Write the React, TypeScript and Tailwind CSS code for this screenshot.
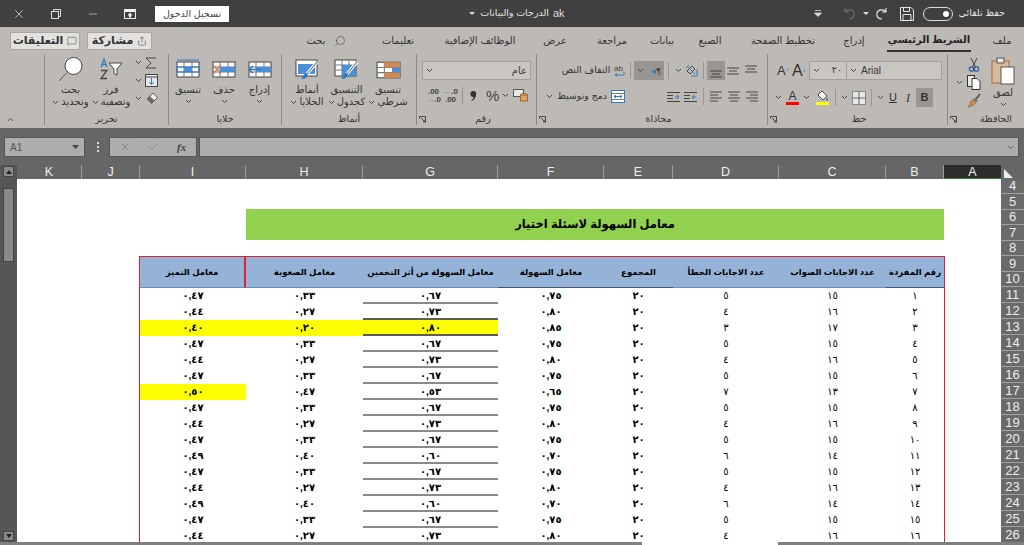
import type { ReactNode } from "react";
import { X, Minus, Search, MessageSquare, Share, ChevronUp, ChevronDown, Check } from "lucide-react";

const ar = "[font-family:'Liberation_Sans','DejaVu_Sans',sans-serif]";

// digits are spelled in Arabic-Indic, the sheet shows them that way
const rows = [
  ["١", "١٥", "٥", "٠,٧٥", "٠,٦٧", "٠,٣٣", "٠,٤٧"],
  ["٢", "١٦", "٤", "٠,٨٠", "٠,٧٣", "٠,٢٧", "٠,٤٤"],
  ["٣", "١٧", "٣", "٠,٨٥", "٠,٨٠", "٠,٢٠", "٠,٤٠"],
  ["٤", "١٥", "٥", "٠,٧٥", "٠,٦٧", "٠,٣٣", "٠,٤٧"],
  ["٥", "١٦", "٤", "٠,٨٠", "٠,٧٣", "٠,٢٧", "٠,٤٤"],
  ["٦", "١٥", "٥", "٠,٧٥", "٠,٦٧", "٠,٣٣", "٠,٤٧"],
  ["٧", "١٣", "٧", "٠,٦٥", "٠,٥٣", "٠,٤٧", "٠,٥٠"],
  ["٨", "١٥", "٥", "٠,٧٥", "٠,٦٧", "٠,٣٣", "٠,٤٧"],
  ["٩", "١٦", "٤", "٠,٨٠", "٠,٧٣", "٠,٢٧", "٠,٤٤"],
  ["١٠", "١٥", "٥", "٠,٧٥", "٠,٦٧", "٠,٣٣", "٠,٤٧"],
  ["١١", "١٤", "٦", "٠,٧٠", "٠,٦٠", "٠,٤٠", "٠,٤٩"],
  ["١٢", "١٥", "٥", "٠,٧٥", "٠,٦٧", "٠,٣٣", "٠,٤٧"],
  ["١٣", "١٦", "٤", "٠,٨٠", "٠,٧٣", "٠,٢٧", "٠,٤٤"],
  ["١٤", "١٤", "٦", "٠,٧٠", "٠,٦٠", "٠,٤٠", "٠,٤٩"],
  ["١٥", "١٥", "٥", "٠,٧٥", "٠,٦٧", "٠,٣٣", "٠,٤٧"],
  ["١٦", "١٦", "٤", "٠,٨٠", "٠,٧٣", "٠,٢٧", "٠,٤٤"],
];

const columns = [
  { name: "K", w: "w-[65px]" },
  { name: "J", w: "w-[58px]" },
  { name: "I", w: "w-[106px]" },
  { name: "H", w: "w-[117px]" },
  { name: "G", w: "w-[135px]" },
  { name: "F", w: "w-[106px]" },
  { name: "E", w: "w-[69px]" },
  { name: "D", w: "w-[106px]" },
  { name: "C", w: "w-[107px]" },
  { name: "B", w: "w-[58px]" },
];

const Caret = ({ className = "" }: { className?: string }) => (
  <svg width="7" height="5" viewBox="0 0 7 5" className={`shrink-0 ${className}`}>
    <path d="M1 1l2.500 2.500L6 1" fill="none" stroke="#444" strokeWidth="1" />
  </svg>
);

function Launcher() {
  return (
    <svg width="7" height="7" viewBox="0 0 7 7" className="ml-[2px] shrink-0">
      <path d="M.5 .5h6v6M.5 .5v2M2 2l4 4M4 6h2V4" fill="none" stroke="#444" strokeWidth="1" />
    </svg>
  );
}

// grid used by the big ribbon buttons
function Sheet({ children, w = 24, h = 20 }: { children?: ReactNode; w?: number; h?: number }) {
  return (
    <svg width={w} height={h} viewBox="0 0 24 20">
      <rect x="1" y="3" width="22" height="15" fill="#fff" stroke="#444" />
      <path d="M1 8h22M1 13h22M8 3v15M16 3v15" stroke="#777" strokeWidth="1" />
      {children}
    </svg>
  );
}

function BigButton({ icon, lines, caretBelow, w }: { icon: ReactNode; lines: string[]; caretBelow?: boolean; w: string }) {
  return (
    <div className={`${w} flex flex-col items-center`}>
      <div className="h-[30px] flex items-center justify-center">{icon}</div>
      {lines.map((line, i) => (
        <div key={line} className="h-[12px] flex items-center justify-center gap-[2px] text-[10px] leading-[12px] text-[#333] whitespace-nowrap">
          {!caretBelow && i === lines.length - 1 && <Caret />}
          <span>{line}</span>
        </div>
      ))}
      {caretBelow && <Caret className="mt-[3px]" />}
    </div>
  );
}

function Group({ w, label, launcher, labelPad = "", children }: { w: string; label: string; launcher?: boolean; labelPad?: string; children: ReactNode }) {
  return (
    <div className={`${w} h-[71px] flex flex-col border-l border-[#8c8985]`}>
      <div className="h-[59px] flex">{children}</div>
      <div className="h-[12px] flex items-center">
        {launcher && <div className="w-[13px] flex"><Launcher /></div>}
        <span className={`flex-1 text-center text-[9.5px] leading-[12px] text-[#333] ${labelPad}`}>{label}</span>
      </div>
    </div>
  );
}

const VLine = ({ className = "" }: { className?: string }) => <div className={`w-px h-[17px] bg-[#999591] ${className}`} />;

function AlignLines({ kind }: { kind: string }) {
  const paths: Record<string, string> = {
    top: "M1 2h12M3 5h8M1 8h12",
    mid: "M1 4h12M3 7h8M1 10h12",
    bot: "M1 7h12M3 10h8M1 13h12",
    left: "M1 2h12M1 5h8M1 8h12M1 11h8",
    center: "M1 2h12M3 5h8M1 8h12M3 11h8",
    right: "M1 2h12M5 5h8M1 8h12M5 11h8",
  };
  return (
    <svg width="14" height="14" viewBox="0 0 14 14">
      <path d={paths[kind]} stroke="#444" strokeWidth="1" fill="none" />
    </svg>
  );
}

function Indent({ flip }: { flip?: boolean }) {
  return (
    <svg width="13" height="12" viewBox="0 0 13 12">
      <path d="M0 1.500h13M0 10.500h13M0 4.500h6M0 7.500h6" stroke="#444" />
      <path d={flip ? "M12 6H8M10 4l2 2-2 2" : "M12 6H8M10 4L8 6l2 2"} stroke="#2f78c4" fill="none" />
    </svg>
  );
}

function TitleBar() {
  return (
    <div className="h-[27px] shrink-0 flex items-center bg-[#404040] text-[#e6e6e6] text-[9.5px]">
      <div className="w-[37px] flex justify-center"><X size={14} strokeWidth={1.2} /></div>
      <div className="w-[37px] flex justify-center">
        <svg width="10" height="10" viewBox="0 0 10 10" fill="none" stroke="#ddd"><rect x=".5" y="2.500" width="7" height="7" /><path d="M2.500 2.500v-2h7v7h-2" /></svg>
      </div>
      <div className="w-[37px] flex justify-center"><Minus size={12} strokeWidth={1.2} /></div>
      <div className="w-[37px] flex justify-center">
        <svg width="12" height="10" viewBox="0 0 12 10"><rect x=".5" y=".5" width="11" height="9" fill="none" stroke="#eee" /><path d="M1 1h10v2H1zM6 3.500l2.500 3h-1.500v2h-2v-2h-1.500z" fill="#eee" /></svg>
      </div>
      <button className="ml-[7px] w-[74px] h-[16px] bg-white text-[#444] text-[9.5px] leading-[16px] text-center">تسجيل الدخول</button>
      <svg width="6" height="4" viewBox="0 0 6 4" className="ml-[240px]"><path d="M0 0h6L3 3z" fill="#ddd" /></svg>
      <span className="ml-[5px] w-[69px] text-right whitespace-nowrap">الدرجات والبيانات</span>
      <span className="ml-[4px] text-[11px] text-[#ddd] [font-family:'Liberation_Sans',sans-serif]">ak</span>
      <div className="ml-auto flex items-center pr-[19px]">
        <svg width="8" height="7" viewBox="0 0 8 7"><path d="M1 .5h6M.5 3h7L4 6.500z" stroke="#ddd" fill="#ddd" strokeWidth=".8" /></svg>
        <svg width="14" height="13" viewBox="0 0 14 13" className="ml-[20px]" fill="none" stroke="#6f6f6f" strokeWidth="1.100"><path d="M3 1v4h4M3 5c2-3 8-3 9 1s-2 6-5 6" /></svg>
        <svg width="6" height="4" viewBox="0 0 6 4" className="ml-[7px]"><path d="M0 0h6L3 3z" fill="#ddd" /></svg>
        <svg width="14" height="13" viewBox="0 0 14 13" className="ml-[6px]" fill="none" stroke="#e6e6e6" strokeWidth="1.100"><path d="M11 1v4H7M11 5C9 2 3 2 2 6s2 6 5 6" /></svg>
        <svg width="14" height="14" viewBox="0 0 14 14" className="ml-[11px]" fill="none" stroke="#e6e6e6"><path d="M.5 .5h10.500l2.500 2.500v10.500H.5zM3.500 .5v4h6v-4M3 13.500v-6h8v6" /></svg>
        <div className="ml-[9px] w-[30px] h-[14px] rounded-full border border-[#ddd] flex items-center justify-end pr-[3px]">
          <span className="w-[6px] h-[6px] rounded-full bg-white" />
        </div>
        <span className="ml-[5px] w-[47px] text-right whitespace-nowrap">حفظ تلقائي</span>
      </div>
    </div>
  );
}

function TabRow() {
  const tabs = [
    { t: "تعليمات", w: "w-[94px]" },
    { t: "الوظائف الإضافية", w: "w-[70px]" },
    { t: "عرض", w: "w-[80px]" },
    { t: "مراجعة", w: "w-[34px]" },
    { t: "بيانات", w: "w-[66px]" },
    { t: "الصيغ", w: "w-[30px]" },
    { t: "تخطيط الصفحة", w: "w-[116px]" },
    { t: "إدراج", w: "w-[26px]" },
  ];
  return (
    <div className="h-[27px] shrink-0 flex items-center bg-[#bdbab6] text-[10px] text-[#333]">
      <div className="ml-[10px] w-[70px] h-[18px] flex items-center justify-center gap-[4px] bg-[#e3e1de] border border-[#a9a6a2] rounded-[2px] text-[11px] font-bold">
        <span>التعليقات</span>
        <MessageSquare size={10} strokeWidth={1.2} />
      </div>
      <div className="ml-[7px] w-[65px] h-[18px] flex items-center justify-center gap-[4px] bg-[#e3e1de] border border-[#a9a6a2] rounded-[2px] text-[11px] font-bold">
        <span>مشاركة</span>
        <Share size={10} strokeWidth={1.2} />
      </div>
      <span className="ml-[151px] w-[26px] text-center">بحث</span>
      <div className="w-[22px] flex justify-center"><Search size={12} strokeWidth={1} className="-scale-x-100" /></div>
      {tabs.map((tab) => (
        <div key={tab.t} className={`${tab.w} flex justify-center whitespace-nowrap`}>{tab.t}</div>
      ))}
      <div className="w-[124px] h-full flex justify-center">
        <span className="h-[23px] mt-[2px] pt-[3px] px-px font-bold text-[#222] border-b-2 border-[#333] whitespace-nowrap">الشريط الرئيسي</span>
      </div>
      <div className="w-[22px] flex justify-center whitespace-nowrap">ملف</div>
    </div>
  );
}

function Ribbon() {
  return (
    <div className="h-[74px] shrink-0 flex items-start bg-[#bdbab6]">
      {/* collapse */}
      <div className="w-[44px] h-[71px] flex items-end pl-[6px] pb-[1px]"><ChevronUp size={9} className="text-[#333]" /></div>

      <Group w="w-[124px]" label="تحرير">
        <div className="flex pl-[5px]">
          <BigButton w="w-[41px]" lines={["بحث", "وتحديد"]} icon={
            <svg width="26" height="26" viewBox="0 0 26 26"><circle cx="15.500" cy="10" r="8.500" fill="#fff" stroke="#444" /><path d="M9 16.500L1 25" stroke="#555" /></svg>
          } />
          <BigButton w="w-[40px]" lines={["فرز", "وتصفية"]} icon={
            <svg width="24" height="24" viewBox="0 0 24 24"><path d="M2 10l3-8 3 8M3 7.500h4" stroke="#2f78c4" fill="none" strokeWidth="1.300" /><path d="M2 13.500h6l-6 8h6" stroke="#444" fill="none" strokeWidth="1.300" /><path d="M10 6h13l-5 6v6l-3-1.500V12z" fill="#fff" stroke="#444" /></svg>
          } />
        </div>
        <div className="ml-[4px] pt-[1px] flex flex-col gap-[3px]">
          {[
            <svg key="s" width="12" height="12" viewBox="0 0 12 12"><path d="M11 1H1l5 5-5 5h10" fill="none" stroke="#444" /></svg>,
            <svg key="f" width="13" height="13" viewBox="0 0 13 13"><rect x=".5" y=".5" width="12" height="12" fill="#e8e8e8" stroke="#444" /><path d="M.5 3h12" stroke="#444" /><path d="M6.500 4v6M4 8l2.500 2.500L9 8" fill="none" stroke="#2f78c4" /></svg>,
            <svg key="e" width="13" height="13" viewBox="0 0 13 13"><path d="M8 1l4.500 4.500-6 6L2 7z" fill="#f2f2f2" stroke="#555" /><path d="M5 4l4.500 4.500L6.500 11.500 2 7z" fill="#6d6d6d" /></svg>,
          ].map((icon, i) => (
            <div key={i} className="h-[15px] flex items-center gap-[3px]"><Caret />{icon}</div>
          ))}
        </div>
      </Group>

      <Group w="w-[113px]" label="خلايا">
        <div className="flex pl-[2px]">
          <BigButton w="w-[34px]" caretBelow lines={["تنسيق"]} icon={
            <Sheet><path d="M1 1h22" stroke="#2f78c4" /><rect x="8" y="8" width="8" height="5" fill="#4a90d9" /><rect x="1" y="8" width="22" height="5" fill="none" stroke="#2f78c4" /></Sheet>
          } />
          <BigButton w="w-[38px]" caretBelow lines={["حذف"]} icon={
            <Sheet><rect x="8" y="8" width="15" height="5" fill="#4a90d9" /><path d="M1 6l8 9M9 6l-8 9" stroke="#c9824f" strokeWidth="1.300" /></Sheet>
          } />
          <BigButton w="w-[33px]" caretBelow lines={["إدراج"]} icon={
            <Sheet><rect x="8" y="8" width="15" height="5" fill="#4a90d9" /><path d="M1 10.500h12M5 7l-4 3.500L5 14" stroke="#2f78c4" strokeWidth="1.300" fill="none" /></Sheet>
          } />
        </div>
      </Group>

      <Group w="w-[135px]" label="أنماط">
        <div className="flex pl-[6px]">
          <BigButton w="w-[38px]" lines={["أنماط", "الخلايا"]} icon={
            <svg width="25" height="23" viewBox="0 0 25 23"><rect x="1" y="2" width="21" height="16" fill="#fff" stroke="#444" /><rect x="3" y="6" width="17" height="10" fill="#4a90d9" /><path d="M22 4L12 16" stroke="#fff" strokeWidth="3" /><path d="M22 4L12 16" stroke="#555" /><path d="M11 15c-2 1-3 3-5 6 3 0 6-1 7-4z" fill="#2f78c4" /></svg>
          } />
          <BigButton w="w-[41px]" lines={["التنسيق", "كجدول"]} icon={
            <svg width="25" height="23" viewBox="0 0 25 23"><rect x="1" y="2" width="21" height="16" fill="#fff" stroke="#444" /><path d="M1 7h21M1 12h21M8 2v16M15 2v16" stroke="#777" /><rect x="8" y="7" width="14" height="11" fill="#4a90d9" /><path d="M23 4L13 16" stroke="#fff" strokeWidth="3" /><path d="M23 4L13 16" stroke="#555" /><path d="M12 15c-2 1-3 3-5 6 3 0 6-1 7-4z" fill="#2f78c4" /></svg>
          } />
          <BigButton w="w-[42px]" lines={["تنسيق", "شرطي"]} icon={
            <Sheet w={25} h={23}><rect x="8" y="3" width="8" height="5" fill="#d08a52" /><rect x="16" y="3" width="7" height="5" fill="#d08a52" /><rect x="16" y="8" width="7" height="5" fill="#4a90d9" /><rect x="8" y="13" width="15" height="5" fill="#d08a52" /></Sheet>
          } />
        </div>
      </Group>

      <Group w="w-[120px]" label="رقم" launcher>
        <div className="w-full flex flex-col pl-[5px] pt-[7px]">
          <div className="w-[109px] h-[19px] flex items-center justify-between px-[3px] bg-[#c9c6c2] border border-[#a3a09c] text-[10px] text-[#333]">
            <Caret />
            <span>عام</span>
          </div>
          <div className="mt-[7px] flex items-center text-[#444]">
            <span className="ml-[3px] w-[17px] text-[8px] leading-[8px] text-center font-bold [font-family:'Liberation_Sans',sans-serif]">.00<br /><span className="text-[#2f78c4]">→</span>.0</span>
            <span className="w-[17px] text-[8px] leading-[8px] text-center font-bold [font-family:'Liberation_Sans',sans-serif]"><span className="text-[#2f78c4]">←</span>.0<br />.00</span>
            <VLine className="ml-[3px]" />
            <svg width="7" height="12" viewBox="0 0 7 12" className="ml-[7px]"><path d="M3.200 1a2.600 2.600 0 0 1 3 3c0 3-2 6-4.500 7l-.5-.7c1.300-.8 2.200-2 2.400-3.400A2.900 2.900 0 1 1 3.200 1z" fill="#333" /></svg>
            <span className="ml-[9px] text-[15px] leading-[16px] [font-family:'Liberation_Sans',sans-serif]">%</span>
            <Caret className="ml-[3px]" />
            <svg width="15" height="13" viewBox="0 0 15 13" className="ml-[4px]"><rect x=".5" y=".5" width="10" height="7" fill="#e8e8e8" stroke="#555" /><ellipse cx="11" cy="6" rx="3.500" ry="1.500" fill="#e0a060" stroke="#a8683a" /><rect x="7.500" y="6" width="7" height="6" fill="#e0a060" stroke="#a8683a" /></svg>
          </div>
        </div>
      </Group>

      <Group w="w-[231px]" label="محاذاة" launcher>
        <div className="w-full flex flex-col pt-[7px] text-[9.5px] text-[#333]">
          <div className="h-[19px] flex items-center">
            <span className="ml-[25px] w-[48px] flex justify-center whitespace-nowrap">التفاف النص</span>
            <svg width="14" height="14" viewBox="0 0 14 14" className="ml-[2px]"><text x="2" y="7" fontSize="8" fill="#444" fontFamily="Liberation Sans">ab</text><path d="M3 11h8c2 0 2-3 0-3M5 9.500L3 11l2 1.500" fill="none" stroke="#2f78c4" /></svg>
            <VLine className="ml-[4px]" />
            <div className="ml-[3px] w-[30px] h-[19px] flex items-center justify-between px-[3px] bg-[#989592]">
              <Caret />
              <span className="text-[9px] leading-[10px] [font-family:'Liberation_Sans',sans-serif]"><span className="text-[#2f78c4]">◂</span>¶</span>
            </div>
            <VLine className="ml-[4px]" />
            <Caret className="ml-[6px]" />
            <svg width="14" height="14" viewBox="0 0 14 14" className="ml-[3px]"><path d="M2 2l8 8M4 1l-3 3M12 5v7H6" fill="none" stroke="#2f78c4" /><path d="M2 7l5-5 3 3-5 5z" fill="none" stroke="#444" /></svg>
            <VLine className="ml-[4px]" />
            <div className="ml-[3px] w-[18px] h-[19px] flex items-center justify-center bg-[#989592]"><AlignLines kind="bot" /></div>
            <div className="w-[16px] flex justify-center"><AlignLines kind="mid" /></div>
            <div className="ml-[2px] w-[16px] flex justify-center"><AlignLines kind="top" /></div>
          </div>
          <div className="mt-[8px] h-[17px] flex items-center">
            <Caret className="ml-[9px]" />
            <span className="ml-[5px] w-[48px] flex justify-center whitespace-nowrap">دمج وتوسيط</span>
            <svg width="14" height="13" viewBox="0 0 14 13" className="ml-[5px]"><rect x=".5" y=".5" width="13" height="12" fill="#fff" stroke="#2f78c4" /><path d="M.5 3.500h13M.5 9.500h13" stroke="#777" /><path d="M3 6.500h8M5 5L3 6.500 5 8M9 5l2 1.500L9 8" stroke="#2f78c4" fill="none" /></svg>
            <div className="ml-[42px] flex gap-[4px]"><Indent flip /><Indent /></div>
            <VLine className="ml-[6px]" />
            <div className="ml-[5px] flex gap-[4px]"><AlignLines kind="left" /><AlignLines kind="center" /><AlignLines kind="right" /></div>
          </div>
        </div>
      </Group>

      <Group w="w-[180px]" label="خط" launcher labelPad="pr-[10px]">
        <div className="w-full flex flex-col pt-[7px] text-[#333]">
          <div className="h-[19px] flex items-center">
            <span className="ml-[9px] w-[13px] text-[13px] leading-[16px] [font-family:'Liberation_Sans',sans-serif]">A<sup className="text-[5px] text-[#2f78c4]">˅</sup></span>
            <span className="ml-[2px] w-[16px] text-[16px] leading-[16px] [font-family:'Liberation_Sans',sans-serif]">A<sup className="text-[5px] text-[#2f78c4]">˄</sup></span>
            <div className="ml-[1px] w-[38px] h-[19px] flex items-center justify-between px-[3px] bg-[#c9c6c2] border border-[#a3a09c] text-[9.5px]">
              <Caret />
              <span className="pr-[1px]">٢٠</span>
            </div>
            <div className="w-[95px] h-[19px] flex items-center gap-[4px] px-[3px] bg-[#c9c6c2] border border-l-0 border-[#a3a09c] text-[10px] [font-family:'Liberation_Sans',sans-serif]">
              <Caret />
              <span>Arial</span>
            </div>
          </div>
          <div className="mt-[8px] h-[19px] flex items-center">
            <Caret className="ml-[7px]" />
            <div className="ml-[4px] w-[13px] flex flex-col items-center text-[12px] leading-[11px] [font-family:'Liberation_Sans',sans-serif]">A<span className="w-[13px] h-[3px] bg-[#ff0000]" /></div>
            <Caret className="ml-[4px]" />
            <svg width="13" height="15" viewBox="0 0 13 15" className="ml-[6px]"><path d="M6 1l5 5-4 4-5-5z" fill="#fff" stroke="#444" /><path d="M11 8c1 1 1.500 2 0 2.500-1-.5-1-1.500 0-2.500z" fill="#444" /><rect x="0" y="12" width="13" height="3" fill="#ffff00" /></svg>
            <VLine className="ml-[6px]" />
            <Caret className="ml-[5px]" />
            <svg width="14" height="14" viewBox="0 0 14 14" className="ml-[4px]"><rect x=".5" y=".5" width="13" height="13" fill="#e8e8e8" stroke="#888" /><path d="M7 .5v13M.5 7h13" stroke="#666" /></svg>
            <VLine className="ml-[5px]" />
            <Caret className="ml-[5px]" />
            <span className="ml-[5px] w-[10px] text-[11px] underline [font-family:'Liberation_Sans',sans-serif]">U</span>
            <span className="ml-[4px] w-[10px] text-center text-[12px] italic [font-family:'Liberation_Serif',serif]">I</span>
            <span className="ml-[3px] w-[17px] h-[19px] text-center text-[11px] leading-[19px] font-bold bg-[#989592] [font-family:'Liberation_Sans',sans-serif]">B</span>
          </div>
        </div>
      </Group>

      <Group w="w-[77px]" label="الحافظة" launcher labelPad="pl-[7px]">
        <div className="flex pl-[8px] pt-[1px]">
          <div className="h-[54px] flex items-center"><Caret /></div>
          <div className="ml-[2px] flex flex-col items-center gap-[3px] pt-[2px] w-[18px]">
            <svg width="14" height="15" viewBox="0 0 14 15"><path d="M4 1l4.500 9M10 1L5.500 10" fill="none" stroke="#444" /><circle cx="4.500" cy="12" r="2.200" fill="none" stroke="#2f5f9e" strokeWidth="1.300" /><circle cx="9.500" cy="12" r="2.200" fill="none" stroke="#2f5f9e" strokeWidth="1.300" /></svg>
            <svg width="14" height="15" viewBox="0 0 14 15"><rect x=".5" y=".5" width="7" height="11" fill="#e8e8e8" stroke="#333" /><path d="M5 3.500h5l3 3v8H5z" fill="#fff" stroke="#333" /></svg>
            <svg width="14" height="15" viewBox="0 0 14 15"><path d="M13 1l-4 5" stroke="#555" strokeWidth="2" /><path d="M8 4.500l3 3-2 2-3-3z" fill="#777" /><path d="M6 6.500l3 3c-1.500 2.500-4 4-8 4.500 1.500-1.500 1.500-3 2-5z" fill="#c88a50" stroke="#8a5a30" strokeWidth=".6" /></svg>
          </div>
          <div className="ml-[5px] w-[30px] flex flex-col items-center">
            <svg width="24" height="28" viewBox="0 0 24 28" className="mt-[2px]"><rect x="1" y="4" width="17" height="22" fill="#d9b99a" stroke="#a8683a" /><rect x="6" y="1" width="7" height="5" fill="#e8e8e8" stroke="#555" /><rect x="10" y="10" width="13" height="17" fill="#fff" stroke="#555" /></svg>
            <span className="mt-[2px] text-[10px] leading-[12px] text-[#333]">لصق</span>
            <Caret className="mt-[3px]" />
          </div>
        </div>
      </Group>
    </div>
  );
}

function FormulaBar() {
  return (
    <div className="h-[37px] shrink-0 flex items-start pt-[9px] bg-[#666666]">
      <div className="ml-[4px] w-[81px] h-[20px] flex items-center justify-between pl-[5px] pr-[5px] bg-[#adadad] border border-[#555] text-[10px] text-[#555] [font-family:'Liberation_Sans',sans-serif]">
        <span>A1</span>
        <svg width="7" height="4" viewBox="0 0 7 4"><path d="M0 0h7L3.500 4z" fill="#444" /></svg>
      </div>
      <div className="ml-[11px] w-[3px] h-[20px] flex flex-col justify-center items-center gap-[2px]">
        <span className="w-[2px] h-[2px] bg-[#ddd]" /><span className="w-[2px] h-[2px] bg-[#ddd]" /><span className="w-[2px] h-[2px] bg-[#ddd]" />
      </div>
      <div className="ml-[10px] w-[88px] h-[20px] flex items-center bg-[#adadad] border border-[#555] text-[#777]">
        <X size={12} strokeWidth={1.5} className="ml-[9px]" />
        <Check size={12} strokeWidth={1.5} className="ml-[16px]" />
        <span className="ml-[18px] text-[11px] italic font-bold text-[#444] [font-family:'Liberation_Serif',serif]">fx</span>
      </div>
      <div className="ml-[2px] w-[820px] h-[20px] flex items-center justify-end pr-[3px] bg-[#adadad] border border-[#555]">
        <ChevronDown size={9} strokeWidth={2} className="text-[#444]" />
      </div>
    </div>
  );
}

function ColumnHeaders() {
  return (
    <div className="h-[14px] shrink-0 flex bg-[#666666] text-[12.5px] leading-[14px] text-[#eeeeee] [font-family:'Liberation_Sans',sans-serif]">
      <div className="w-[17px] flex justify-center bg-[#565656]">
        <div className="w-[11px] h-[11px] mt-[1px] flex items-center justify-center bg-[#8a8a8a] border border-[#444]">
          <svg width="6" height="4" viewBox="0 0 6 4"><path d="M0 4h6L3 0z" fill="#222" /></svg>
        </div>
      </div>
      {columns.map((col) => (
        <div key={col.name} className={`${col.w} text-center border-r border-[#9a9a9a]`}>{col.name}</div>
      ))}
      <div className="w-[57px] text-center bg-[#2e2e2e] border-b border-[#2e7d32]">A</div>
      <div className="w-[23px] flex items-end pl-[3px] pb-[1px]">
        <svg width="9" height="9" viewBox="0 0 9 9"><path d="M0 0l9 9H0z" fill="#eee" /></svg>
      </div>
    </div>
  );
}

function ScrollBar() {
  return (
    <div className="w-[17px] flex flex-col items-center bg-[#565656]">
      <div className="mt-[9px] w-[11px] h-[74px] bg-[#8a8a8a] border border-[#444]" />
      <div className="mt-auto mb-[1px] w-[11px] h-[10px] flex items-center justify-center bg-[#8a8a8a] border border-[#444]">
        <svg width="6" height="4" viewBox="0 0 6 4"><path d="M0 0h6L3 4z" fill="#222" /></svg>
      </div>
    </div>
  );
}

function Grid() {
  const headers = [
    { t: "معامل التميز", w: "w-[106px]", line: "border-[#6c8ebc]" },
    { t: "معامل الصعوبة", w: "w-[117px]", line: "border-[#6c8ebc]" },
    { t: "معامل السهولة من أثر التخمين", w: "w-[135px]", line: "border-[#6c8ebc]" },
    { t: "معامل السهولة", w: "w-[106px]", line: "border-[#44546a]" },
    { t: "المجموع", w: "w-[69px]", line: "border-[#44546a]" },
    { t: "عدد الاجابات الخطأ", w: "w-[106px]", line: "border-[#6c8ebc]" },
    { t: "عدد الاجابات الصواب", w: "w-[107px]", line: "border-[#6c8ebc]" },
    { t: "رقم المفردة", w: "w-[58px]", line: "border-[#44546a]" },
  ];
  return (
    <div className={`w-[984px] h-full overflow-hidden bg-white text-black ${ar}`}>
      <div className="ml-[229px] mt-[30px] w-[698px] h-[31px] flex items-center justify-center bg-[#92d050] text-[11.5px] font-bold">
        معامل السهولة لاسئلة اختيار
      </div>
      <div className="ml-[122px] mt-[16px] w-[806px] border-x border-t border-[#e0202a]">
        <div className="flex h-[31px] bg-[#95b3d7] text-[8.5px] font-bold">
          {headers.map((h, i) => (
            <div key={h.t} className={`${h.w} flex items-center justify-center border-b whitespace-nowrap ${h.line} ${i === 0 ? "border-r-2 border-r-[#e0202a]" : ""}`}>{h.t}</div>
          ))}
        </div>
        {rows.map((r, i) => (
          <div key={r[0]} className="flex h-[16px] text-[10px] leading-[16px] text-center">
            <div className={`w-[106px] font-bold ${i === 2 || i === 6 ? "bg-[#ffff00]" : ""}`}>{r[6]}</div>
            <div className={`w-[117px] font-bold ${i === 2 ? "bg-[#ffff00]" : ""}`}>{r[5]}</div>
            <div className={`w-[135px] font-bold border-b-2 ${i === 2 ? "bg-[#ffff00] border-[#5c5c5c]" : i === 1 ? "border-[#5c5c5c]" : "border-[#8a8a8a]"}`}>{r[4]}</div>
            <div className="w-[106px] font-bold">{r[3]}</div>
            <div className="w-[69px] font-bold">٢٠</div>
            <div className="w-[106px]">{r[2]}</div>
            <div className="w-[107px]">{r[1]}</div>
            <div className="w-[58px]">{r[0]}</div>
          </div>
        ))}
      </div>
    </div>
  );
}

function RowHeaders() {
  const top = [4, 5, 6, 7, 8, 9, 10];
  const rest = [11, 12, 13, 14, 15, 16, 17, 18, 19, 20, 21, 22, 23, 24, 25, 26];
  const cell = "flex items-center justify-center bg-[#6a6a6a] border-b border-[#a0a0a0] text-[13px] text-[#eeeeee]";
  return (
    <div className="w-[23px] flex flex-col bg-[#666666] [font-family:'Liberation_Sans',sans-serif]">
      {top.map((n) => <div key={n} className={`h-[15.43px] ${cell}`}>{n}</div>)}
      {rest.map((n) => <div key={n} className={`h-[16px] shrink-0 ${cell}`}>{n}</div>)}
    </div>
  );
}

export default function App() {
  return (
    <div className={`w-[1024px] h-[545px] overflow-hidden flex flex-col bg-[#666666] ${ar}`}>
      <TitleBar />
      <TabRow />
      <Ribbon />
      <FormulaBar />
      <ColumnHeaders />
      <div className="h-[363px] shrink-0 flex overflow-hidden">
        <ScrollBar />
        <Grid />
        <RowHeaders />
      </div>
      {/* sheet tabs strip, only its top edge is still in frame */}
      <div className="flex-1 flex bg-[#808080]">
        <div className="ml-[642px] w-[136px] bg-white" />
      </div>
    </div>
  );
}
